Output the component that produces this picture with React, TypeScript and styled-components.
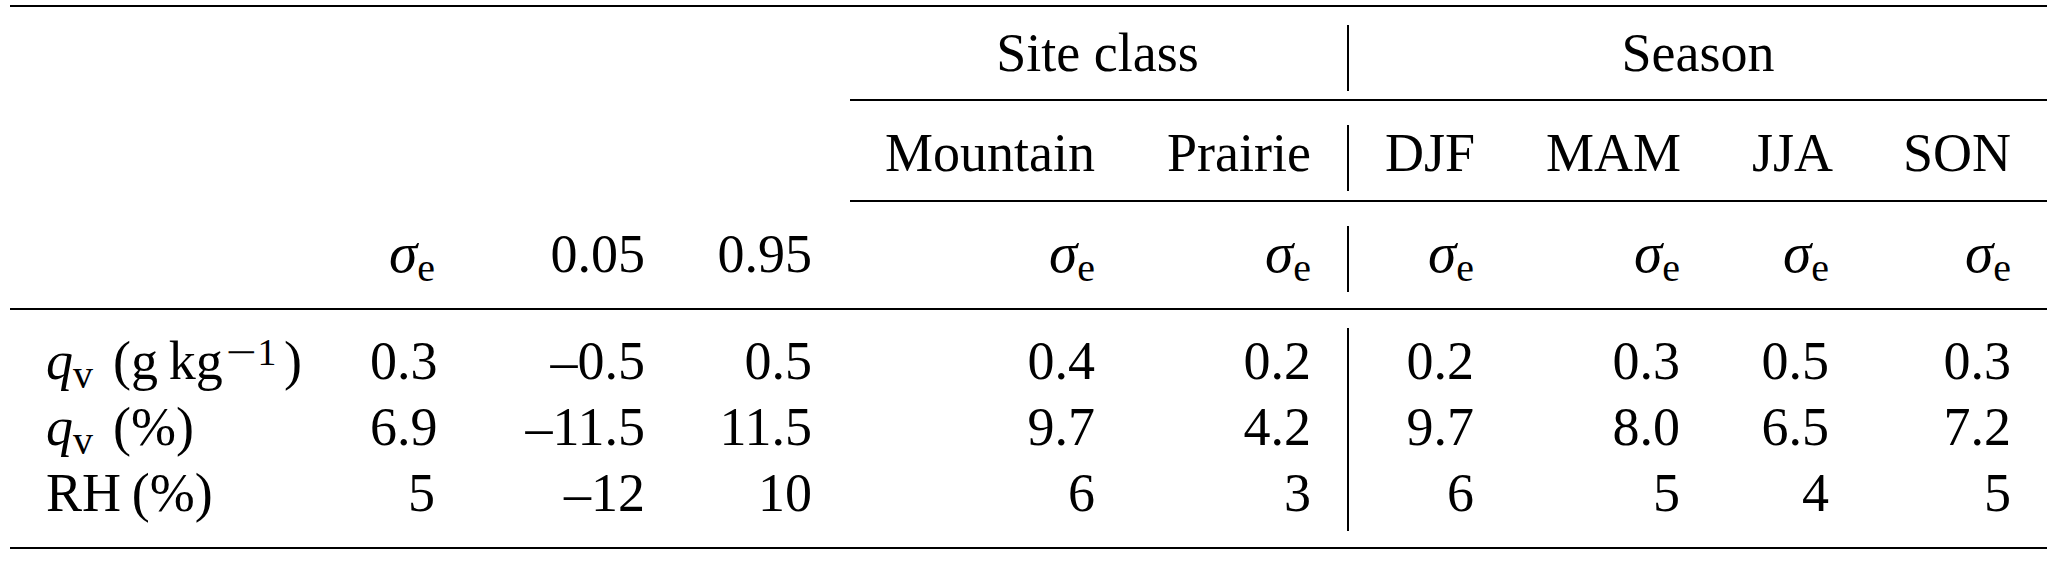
import React from "react";
import styled, { createGlobalStyle } from "styled-components";

// column widths follow the booktabs layout (tabcolsep ~36px on both sides)
const COLS = "324px 137px 210px 167px 283px 216px 163px 206px 149px 182px";
const DIVIDER_COL = 6;

const GlobalStyle = createGlobalStyle`
  html, body {
    margin: 0;
    padding: 0;
    background: #fff;
  }
  body {
    font-family: "Liberation Serif", "Times New Roman", serif;
    color: #000;
  }
`;

const Table = styled.div`
  width: 2037px;
  padding: 5px 0 0 10px;
`;

const Rule = styled.div<{ $gap?: number }>`
  height: 2px;
  background: #000;
  margin-top: ${(p) => p.$gap ?? 0}px;
`;

const Row = styled.div<{ $gap?: number }>`
  display: grid;
  grid-template-columns: ${COLS};
  margin-top: ${(p) => p.$gap ?? 0}px;
`;

const PartialRule = styled.div`
  grid-column: 5 / -1;
  height: 2px;
  margin-left: 2px;
  background: #000;
`;

const Cell = styled.div<{ $left?: boolean; $divider?: boolean; $tall?: boolean }>`
  box-sizing: border-box;
  height: ${(p) => (p.$tall ? 71 : 66)}px;
  padding: ${(p) => (p.$tall ? 5 : 0)}px 36px 10px;
  font-size: 54px;
  line-height: 56px;
  white-space: nowrap;
  text-align: ${(p) => (p.$left ? "left" : "right")};
  word-spacing: ${(p) => (p.$left ? "0.12em" : "normal")};
  border-left: ${(p) => (p.$divider ? "2px solid #000" : "none")};
`;

const GroupCell = styled(Cell)<{ $span: string }>`
  grid-column: ${(p) => p.$span};
  text-align: center;
`;

const Var = styled.span<{ $big?: boolean }>`
  font-style: italic;
  font-size: ${(p) => (p.$big ? "1.06em" : "1em")};
  line-height: 0;
`;

const Sub = styled.span`
  font-size: 0.74em;
  line-height: 0;
  vertical-align: -0.22em;
  word-spacing: normal;
`;

const Sup = styled.span`
  font-size: 0.7em;
  line-height: 0;
  vertical-align: 0.36em;
  padding: 0 0.2em 0 0.06em;
`;

// math minus in superscripts is longer than the text one
const Minus = styled.span`
  display: inline-block;
  width: 0.86em;
  text-align: center;
  transform: scaleX(1.45);
`;

const Sigma = () => (
  <>
    <Var $big>σ</Var>
    <Sub>e</Sub>
  </>
);

const header3: React.ReactNode[] = [
  "",
  <Sigma />,
  "0.05",
  "0.95",
  <Sigma />,
  <Sigma />,
  <Sigma />,
  <Sigma />,
  <Sigma />,
  <Sigma />,
];

const body: { label: React.ReactNode; values: string[] }[] = [
  {
    label: (
      <>
        <Var>q</Var>
        <Sub>v</Sub> (g{"\u2009"}kg
        <Sup>
          <Minus>−</Minus>1
        </Sup>
        )
      </>
    ),
    values: ["0.3", "–0.5", "0.5", "0.4", "0.2", "0.2", "0.3", "0.5", "0.3"],
  },
  {
    label: (
      <>
        <Var>q</Var>
        <Sub>v</Sub> (%)
      </>
    ),
    values: ["6.9", "–11.5", "11.5", "9.7", "4.2", "9.7", "8.0", "6.5", "7.2"],
  },
  {
    label: <>RH{"\u2009"}(%)</>,
    values: ["5", "–12", "10", "6", "3", "6", "5", "4", "5"],
  },
];

export default function App() {
  return (
    <>
      <GlobalStyle />
      <Table>
        <Rule />

        <Row $gap={18}>
          <Cell />
          <Cell />
          <Cell />
          <Cell />
          <GroupCell $span="5 / 7">Site class</GroupCell>
          <GroupCell $span="7 / 11" $divider>
            Season
          </GroupCell>
        </Row>

        <Row $gap={8}>
          <PartialRule />
        </Row>

        <Row $gap={24}>
          <Cell />
          <Cell />
          <Cell />
          <Cell />
          <Cell>Mountain</Cell>
          <Cell>Prairie</Cell>
          <Cell $divider>DJF</Cell>
          <Cell>MAM</Cell>
          <Cell>JJA</Cell>
          <Cell>SON</Cell>
        </Row>

        <Row $gap={9}>
          <PartialRule />
        </Row>

        <Row $gap={24}>
          {header3.map((h, i) => (
            <Cell key={i} $divider={i === DIVIDER_COL}>
              {h}
            </Cell>
          ))}
        </Row>

        <Rule $gap={16} />

        {body.map((r, ri) => (
          <Row key={ri} $gap={ri === 0 ? 18 : 0}>
            <Cell $left $tall={ri === 0}>
              {r.label}
            </Cell>
            {r.values.map((v, i) => (
              <Cell key={i} $tall={ri === 0} $divider={i + 1 === DIVIDER_COL}>
                {v}
              </Cell>
            ))}
          </Row>
        ))}

        <Rule $gap={16} />
      </Table>
    </>
  );
}
